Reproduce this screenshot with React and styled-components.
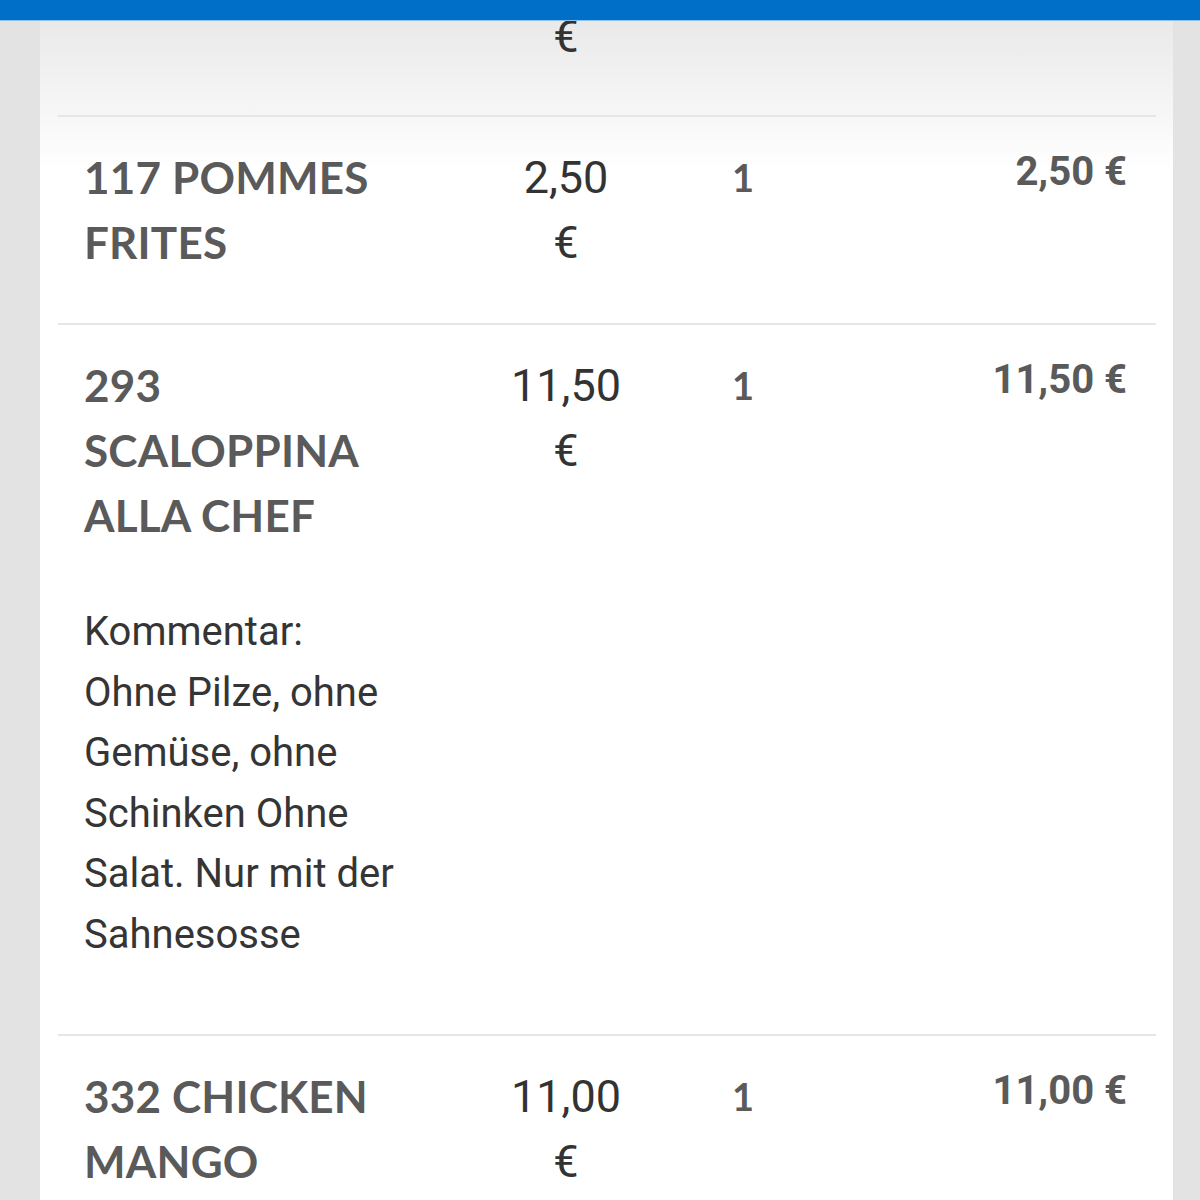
import styled, { createGlobalStyle } from "styled-components";

const GlobalStyle = createGlobalStyle`
  html, body {
    margin: 0;
    padding: 0;
    background: #e3e3e3;
  }
  body {
    font-family: Roboto, "Liberation Sans", sans-serif;
  }
`;

const TopBar = styled.header`
  position: fixed;
  top: 0;
  left: 0;
  right: 0;
  height: 20px;
  background: #006fc8;
  border-bottom: 1px solid #8fc1ea;
  z-index: 10;
`;

const Page = styled.div`
  display: flex;
  min-height: 1200px;
  padding: 0 27px 0 40px;
`;

const Card = styled.main`
  flex: 1;
  background: linear-gradient(#e9e9e9 20px, #f6f6f6 110px, #fff 170px);
  padding: 0 17px 0 18px;
`;

const Row = styled.div`
  display: grid;
  grid-template-columns: 400px 216px 138px 1fr;
  align-items: start;
  padding: ${(p) => (p.$partial ? "4px 0 46px" : "28px 0 48px")};
  border-top: ${(p) => (p.$partial ? "none" : "2px solid #e6e6e6")};
`;

const NameCell = styled.div`
  padding: 0 49px 0 26px;
`;

const Name = styled.div`
  font-family: Lato, "Open Sans", sans-serif;
  font-weight: 700;
  font-size: 44px;
  letter-spacing: 0.2px;
  line-height: 65px;
  color: #5a5a5a;
  text-transform: uppercase;
`;

const Comment = styled.div`
  margin: 54px 0 21px;
  font-size: 40px;
  line-height: 60.5px;
  color: #353535;
`;

const Price = styled.div`
  font-size: 45px;
  line-height: 65px;
  color: #333;
  text-align: center;
  padding: 0 51px;
`;

const Qty = styled.div`
  font-family: Lato, "Open Sans", sans-serif;
  font-weight: 700;
  font-size: 38px;
  line-height: 65px;
  color: #5a5a5a;
  text-align: center;
`;

const Total = styled.div`
  padding: 3px 29px 0 0;
  font-weight: 700;
  font-size: 40px;
  line-height: 48px;
  color: #5a5a5a;
  text-align: right;
`;

const items = [
  { id: 117, name: "Pommes Frites", price: "2,50", qty: 1 },
  {
    id: 293,
    name: "Scaloppina alla Chef",
    price: "11,50",
    qty: 1,
    comment:
      "Ohne Pilze, ohne Gemüse, ohne Schinken Ohne Salat. Nur mit der Sahnesosse",
  },
  { id: 332, name: "Chicken Mango", price: "11,00", qty: 1 },
];

const App = () => {
  return (
    <>
      <GlobalStyle />
      <TopBar />
      <Page>
        <Card>
          <Row $partial>
            <NameCell />
            <Price>€</Price>
          </Row>
          {items.map((item) => (
            <Row key={item.id}>
              <NameCell>
                <Name>{`${item.id} ${item.name}`}</Name>
                {item.comment && (
                  <Comment>
                    Kommentar:
                    <br />
                    {item.comment}
                  </Comment>
                )}
              </NameCell>
              <Price>{`${item.price} €`}</Price>
              <Qty>{item.qty}</Qty>
              <Total>{`${item.price} €`}</Total>
            </Row>
          ))}
        </Card>
      </Page>
    </>
  );
};

export default App;
